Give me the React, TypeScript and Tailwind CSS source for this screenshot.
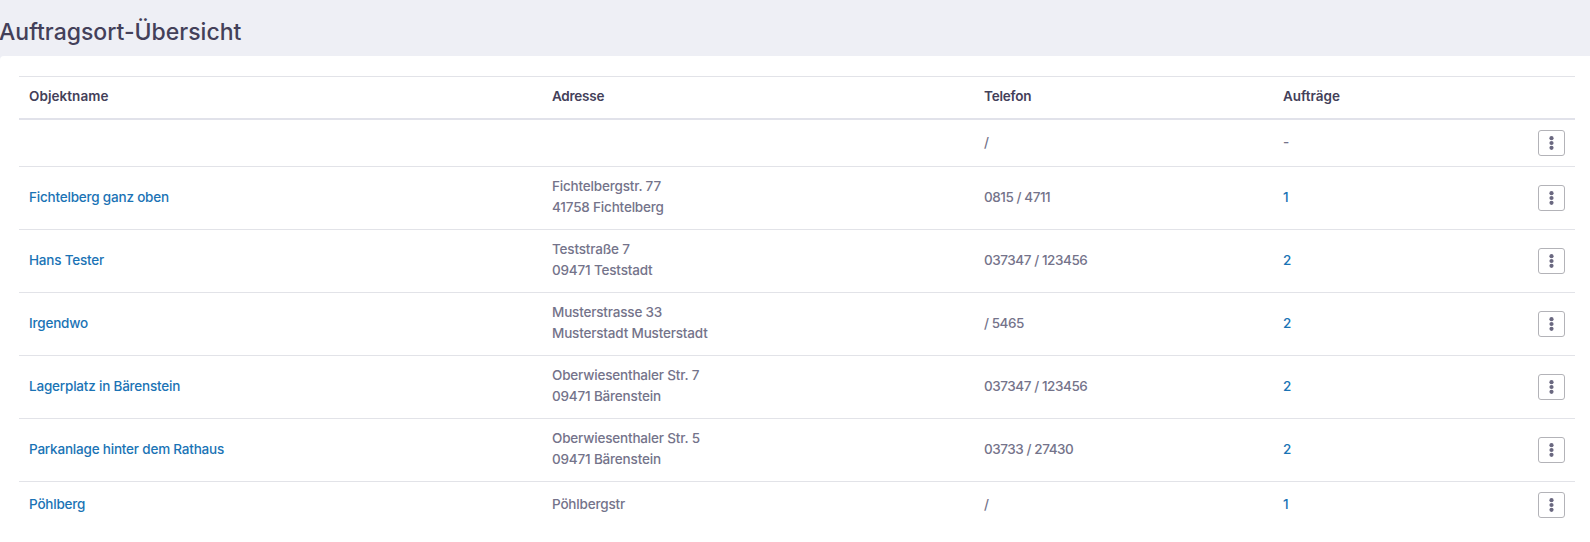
const places = [
    { name: "", address: [], phone: "/", orders: "-" },
    { name: "Fichtelberg ganz oben", address: ["Fichtelbergstr. 77", "41758 Fichtelberg"], phone: "0815 / 4711", orders: "1" },
    { name: "Hans Tester", address: ["Teststraße 7", "09471 Teststadt"], phone: "037347 / 123456", orders: "2" },
    { name: "Irgendwo", address: ["Musterstrasse 33", "Musterstadt Musterstadt"], phone: "/ 5465", orders: "2" },
    { name: "Lagerplatz in Bärenstein", address: ["Oberwiesenthaler Str. 7", "09471 Bärenstein"], phone: "037347 / 123456", orders: "2" },
    { name: "Parkanlage hinter dem Rathaus", address: ["Oberwiesenthaler Str. 5", "09471 Bärenstein"], phone: "03733 / 27430", orders: "2" },
    { name: "Pöhlberg", address: ["Pöhlbergstr"], phone: "/", orders: "1" },
];

const rowGrid = "grid grid-cols-[523px_432px_299px_1fr_47px] items-center *:px-2.5";

function MenuButton() {
    return (
        <button className="flex h-[26px] w-[27px] items-center justify-center rounded-[3px] border border-[#b3b3b8] bg-white text-[#6a6880]">
            <svg width="5" height="14" viewBox="0 0 5 14" fill="currentColor">
                <circle cx="2.5" cy="2.2" r="2.1" />
                <circle cx="2.5" cy="7" r="2.1" />
                <circle cx="2.5" cy="11.8" r="2.1" />
            </svg>
        </button>
    );
}

export default function App() {
    return (
        <div className="min-h-screen bg-[#eeeff5] font-['Inter',sans-serif] text-[#74738a]">
            <header className="h-14 pt-4">
                <h1 className="-ml-px text-[23px] leading-8 font-medium whitespace-nowrap text-[#434059]">Auftragsort-Übersicht</h1>
            </header>

            <main className="h-[486px] rounded-tl bg-white pt-5 pr-[15px] pl-[19px] text-[13.5px] leading-[21px] font-medium">
                {/* Tabellenkopf */}
                <div className={`${rowGrid} h-11 border-t border-b-2 border-t-[#e2e3e8] border-b-[#e1e2ea] pb-0.5 font-semibold text-[#434059]`}>
                    <div className="tracking-[0.05px]">Objektname</div>
                    <div className="tracking-[-0.25px]">Adresse</div>
                    <div className="tracking-[-0.2px]">Telefon</div>
                    <div>Aufträge</div>
                </div>

                {/* Auftragsorte */}
                <div className="divide-y divide-[#e2e3e8]">
                    {places.map((place, i) => (
                        <div key={i} className={`${rowGrid} py-2.5`}>
                            <div className="pb-0.5 tracking-[-0.2px] text-[#1a73b5]">{place.name}</div>
                            <div className="-mt-px mb-px tracking-[-0.18px]">
                                {place.address.map((line) => (
                                    <div key={line}>{line}</div>
                                ))}
                            </div>
                            <div className="pb-0.5 tracking-[-0.44px]">{place.phone}</div>
                            <div className={place.orders === "-" ? "pb-0.5" : "pb-0.5 text-[#1a73b5]"}>{place.orders}</div>
                            <div>
                                <MenuButton />
                            </div>
                        </div>
                    ))}
                </div>
            </main>
        </div>
    );
}
